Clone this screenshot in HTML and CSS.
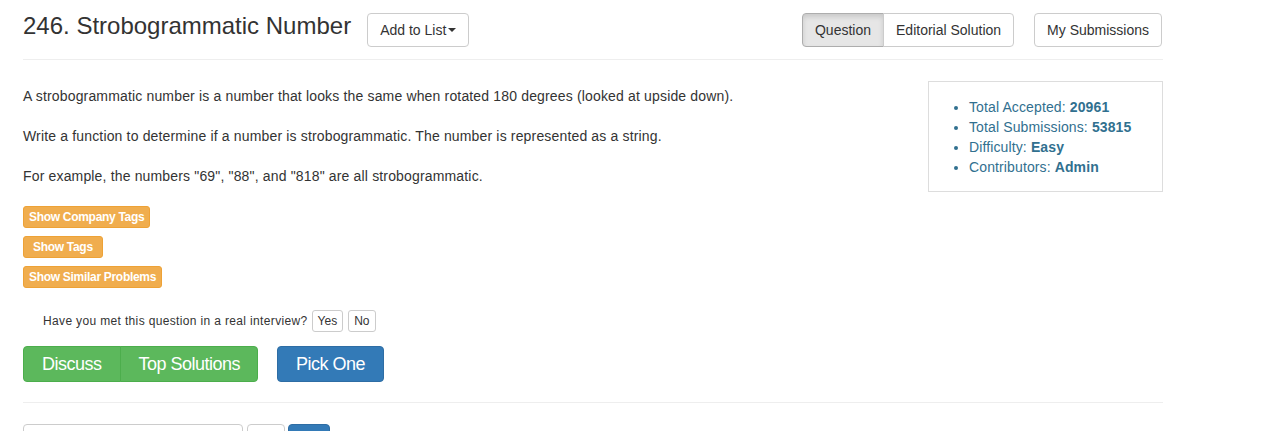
FILE: index.html
```html
<!DOCTYPE html>
<html>
<head>
<meta charset="utf-8">
<link rel="stylesheet" href="styles.css">
</head>
<body>
<div class="container">
  <div class="header">
    <h3 class="title">246. Strobogrammatic Number</h3>
    <button class="btn btn-default add-list">Add to List<span class="caret"></span></button>
    <div class="spacer"></div>
    <div class="btn-group">
      <button class="btn btn-default active">Question</button>
      <button class="btn btn-default">Editorial Solution</button>
    </div>
    <button class="btn btn-default submissions">My Submissions</button>
  </div>
  <hr class="rule">
  <div class="main">
    <div class="content">
      <div class="question">
        <p>A strobogrammatic number is a number that looks the same when rotated 180 degrees (looked at upside down).</p>
        <p>Write a function to determine if a number is strobogrammatic. The number is represented as a string.</p>
        <p>For example, the numbers "69", "88", and "818" are all strobogrammatic.</p>
      </div>
      <div class="tags">
        <button class="btn-tag">Show Company Tags</button>
        <button class="btn-tag wide">Show Tags</button>
        <button class="btn-tag">Show Similar Problems</button>
      </div>
      <div class="interview">
        <span>Have you met this question in a real interview?</span>
        <button class="btn-xs">Yes</button>
        <button class="btn-xs">No</button>
      </div>
      <div class="actions">
        <div class="btn-group">
          <button class="btn-lg green">Discuss</button>
          <button class="btn-lg green">Top Solutions</button>
        </div>
        <button class="btn-lg blue">Pick One</button>
      </div>
    </div>
    <div class="sidebar">
      <ul>
        <li>Total Accepted: <strong>20961</strong></li>
        <li>Total Submissions: <strong>53815</strong></li>
        <li>Difficulty: <strong>Easy</strong></li>
        <li>Contributors: <strong>Admin</strong></li>
      </ul>
    </div>
  </div>
  <hr class="rule bottom-rule">
  <div class="editor-bar">
    <div class="select-box"></div>
    <div class="small-btn"></div>
    <div class="blue-btn"></div>
  </div>
</div>
</body>
</html>
```

FILE: styles.css
```css
html, body {
  margin: 0;
  padding: 0;
  background: #fff;
}
body {
  font-family: "Liberation Sans", Arial, sans-serif;
  font-size: 14px;
  line-height: 20px;
  color: #333;
  overflow: hidden;
  height: 431px;
}
.container {
  width: 1140px;
  margin-left: 23px;
}
.header {
  display: flex;
  align-items: flex-start;
  padding-top: 13px;
}
.title {
  margin: 0 16px 0 0;
  font-size: 24px;
  font-weight: 500;
  line-height: 26px;
  color: #333;
}
.spacer {
  flex: 1;
}
.btn {
  font-family: inherit;
  font-size: 14px;
  line-height: 20px;
  padding: 6px 12px;
  border: 1px solid #ccc;
  border-radius: 4px;
  background: #fff;
  color: #333;
  height: 34px;
  margin: 0;
}
.add-list {
  display: flex;
  align-items: center;
}
.caret {
  display: inline-block;
  width: 0;
  height: 0;
  margin-left: 2px;
  border-top: 4px solid #333;
  border-left: 4px solid transparent;
  border-right: 4px solid transparent;
}
.btn-group {
  display: flex;
}
.btn-group .btn:first-child {
  border-top-right-radius: 0;
  border-bottom-right-radius: 0;
}
.btn-group .btn:last-child {
  border-top-left-radius: 0;
  border-bottom-left-radius: 0;
  margin-left: -1px;
}
.btn.active {
  background: #e6e6e6;
  border-color: #adadad;
  box-shadow: inset 0 3px 5px rgba(0,0,0,0.125);
}
.submissions {
  margin-left: 20px;
  margin-right: 1px;
}
.rule {
  border: 0;
  border-top: 1px solid #eee;
  margin: 12px 0 0 0;
  height: 0;
}
.main {
  display: flex;
  align-items: flex-start;
}
.content {
  flex: 1;
}
.question {
  padding-top: 26px;
  letter-spacing: 0.16px;
}
.question p {
  margin: 0 0 20px 0;
}
.tags {
  display: flex;
  flex-direction: column;
  align-items: flex-start;
  gap: 8px;
}
.btn-tag {
  font-family: inherit;
  font-size: 12px;
  font-weight: bold;
  letter-spacing: -0.3px;
  line-height: 18px;
  height: 22px;
  padding: 1px 5px;
  border: 1px solid #eea236;
  background: #f0ad4e;
  color: #fff;
  border-radius: 3px;
  margin: 0;
}
.btn-tag.wide {
  padding: 1px 9px;
}
.interview {
  display: flex;
  align-items: center;
  margin-top: 22px;
  padding-left: 20px;
  font-size: 12px;
}
.interview span {
  margin-right: 4px;
  letter-spacing: 0.35px;
}
.btn-xs {
  font-family: inherit;
  font-size: 12px;
  line-height: 18px;
  height: 22px;
  padding: 1px 5px;
  border: 1px solid #ccc;
  background: #fff;
  color: #333;
  border-radius: 3px;
  margin: 0 5px 0 0;
}
.actions {
  display: flex;
  margin-top: 14px;
  gap: 19px;
}
.btn-lg {
  font-family: inherit;
  font-size: 18px;
  letter-spacing: -0.5px;
  line-height: 22px;
  height: 36px;
  padding: 6px 18px;
  border: 1px solid;
  border-radius: 4px;
  color: #fff;
  margin: 0;
}
.green {
  background: #5cb85c;
  border-color: #4cae4c;
}
.btn-group .green:first-child {
  border-top-right-radius: 0;
  border-bottom-right-radius: 0;
}
.btn-group .green:last-child {
  border-top-left-radius: 0;
  border-bottom-left-radius: 0;
  margin-left: -1px;
  padding: 6px 17px 6px 18px;
}
.blue {
  background: #337ab7;
  border-color: #2e6da4;
}
.sidebar {
  width: 233px;
  margin-top: 21px;
  border: 1px solid #ddd;
  padding: 15px 0 14px 0;
  color: #31708f;
  letter-spacing: 0.12px;
}
.sidebar ul {
  margin: 0;
  padding-left: 40px;
}
.sidebar strong {
  font-weight: bold;
}
.bottom-rule {
  margin-top: 20px;
}
.editor-bar {
  display: flex;
  margin-top: 21px;
}
.select-box {
  width: 218px;
  height: 34px;
  border: 1px solid #ccc;
  border-radius: 4px;
}
.small-btn {
  width: 36px;
  height: 34px;
  border: 1px solid #ccc;
  border-radius: 4px;
  margin-left: 4px;
}
.blue-btn {
  width: 40px;
  height: 34px;
  border: 1px solid #2e6da4;
  background: #337ab7;
  border-radius: 4px;
  margin-left: 3px;
}
```
